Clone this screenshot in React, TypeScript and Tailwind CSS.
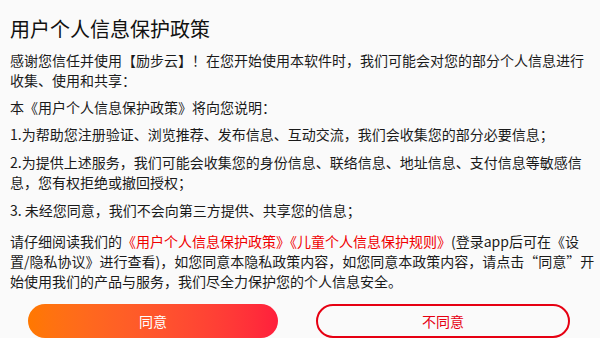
import React from "react";

export default function App() {
  const font = { fontFamily: '"Noto Sans CJK SC", "Noto Sans", sans-serif' };
  return (
    <div
      className="w-[600px] h-[338px] overflow-hidden bg-[#fafafa] text-[#1a1a1a]"
      style={font}
    >
      <div className="pl-[10px] pr-[4px] pt-[15px]">
        <div className="text-[20px] leading-[28px] text-[#111]">用户个人信息保护政策</div>
        <div className="mt-[7px] text-[14px] leading-[20px] whitespace-nowrap">
          感谢您信任并使用【励步云】！在您开始使用本软件时，我们可能会对您的部分个人信息进行
          <br />
          收集、使用和共享：
        </div>
        <div className="mt-[7px] text-[14px] leading-[20px] whitespace-nowrap">
          本《用户个人信息保护政策》将向您说明：
        </div>
        <div className="mt-[7px] text-[14px] leading-[20px] whitespace-nowrap">
          1.为帮助您注册验证、浏览推荐、发布信息、互动交流，我们会收集您的部分必要信息；
        </div>
        <div className="mt-[8px] text-[14px] leading-[20px] whitespace-nowrap">
          2.为提供上述服务，我们可能会收集您的身份信息、联络信息、地址信息、支付信息等敏感信
          <br />
          息，您有权拒绝或撤回授权；
        </div>
        <div className="mt-[8px] text-[14px] leading-[20px] whitespace-nowrap">
          3. 未经您同意，我们不会向第三方提供、共享您的信息；
        </div>
        <div className="mt-[11px] text-[14px] leading-[20px] whitespace-nowrap">
          请仔细阅读我们的
          <span className="text-[#f00000]">《用户个人信息保护政策》《儿童个人信息保护规则》</span>
          (登录app后可在《设
          <br />
          置/隐私协议》进行查看)，如您同意本隐私政策内容，如您同意本政策内容，请点击“同意”开
          <br />
          始使用我们的产品与服务，我们尽全力保护您的个人信息安全。
        </div>
      </div>
      <div className="mt-[13px] flex gap-[38px] pl-[28px] pr-[30px]">
        <div className="flex-1 h-[34px] rounded-full bg-gradient-to-r from-[#ff7800] to-[#ff1e3c] flex items-center justify-center text-white text-[14px]">
          同意
        </div>
        <div className="flex-1 h-[34px] rounded-full border-2 border-[#e60012] flex items-center justify-center text-[#e60012] text-[14px]">
          不同意
        </div>
      </div>
    </div>
  );
}
